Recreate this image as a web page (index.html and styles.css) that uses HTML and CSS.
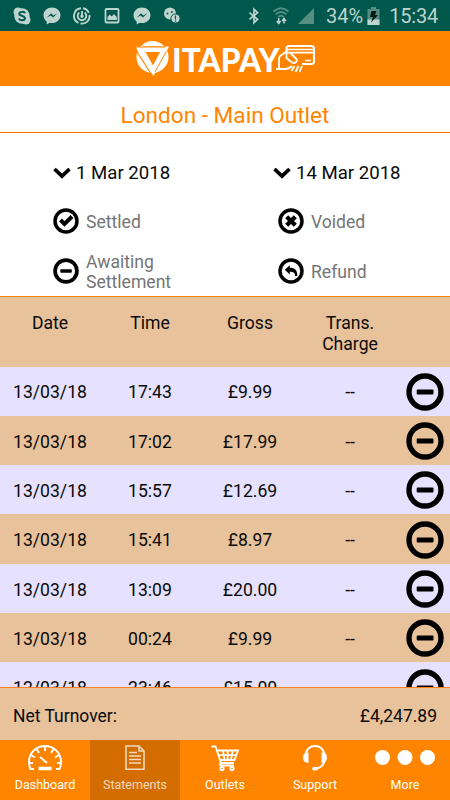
FILE: index.html
```html
<!DOCTYPE html>
<html lang="en">
<head>
<meta charset="utf-8">
<title>Vitapay Statements</title>
<link rel="stylesheet" href="styles.css">
</head>
<body>
<svg class="defs" width="0" height="0" aria-hidden="true">
  <symbol id="minus" viewBox="0 0 38 38"><circle cx="19" cy="19" r="16" fill="none" stroke="#000" stroke-width="5.4"/><rect x="10.7" y="16.4" width="16.8" height="5.2" rx="1" fill="#000"/></symbol>
  <symbol id="chevron" viewBox="0 0 18 12"><path d="M1.500 2 9 9.200 16.500 2" fill="none" stroke="#000" stroke-width="3.700"/></symbol>
  <symbol id="messenger" viewBox="0 0 18 18"><path fill="#bed4ce" d="M9 .5C4.200.5.5 3.900.5 8.300c0 2.600 1.200 4.800 3.200 6.200V17.500l3-1.700c.7.200 1.500.3 2.300.3 4.800 0 8.500-3.400 8.500-7.800S13.800.5 9 .5z"/><path d="M3.800 10.500 8 6.200l2.300 2.200 4-2.200-4.300 4.400-2.300-2.200z" fill="#00574b"/></symbol>
</svg>
<div class="app">
  <div class="status">
    <div class="notices">
      <svg width="18" height="18" viewBox="0 0 18 18"><circle cx="9" cy="9" r="7.700" fill="#bed4ce"/><circle cx="5" cy="5" r="4.500" fill="#bed4ce"/><circle cx="13" cy="13" r="4.500" fill="#bed4ce"/><path d="M12 6.200C11.500 4.500 6.500 4.200 6.300 6.700c-.2 2.700 5.700 1.700 5.600 4.500-.1 2.600-5.300 2.500-6 .3" fill="none" stroke="#00574b" stroke-width="2"/></svg>
      <svg width="18" height="18"><use href="#messenger"/></svg>
      <svg width="18" height="18" viewBox="0 0 18 18" fill="none" stroke="#bed4ce" stroke-width="1.900"><path d="M8 1.300a7.600 7.600 0 0 0-2.500 14.500M7.500 16.500A7.600 7.600 0 0 0 16.500 8M15.800 6A7.500 7.500 0 0 0 10 1.300"/><path d="M6.300 5.600a4.300 4.300 0 1 0 5.400 0M9 4v4.500"/><circle cx="9" cy="9.300" r=".8"/></svg>
      <svg width="18" height="18" viewBox="0 0 18 18"><rect x="2.500" y="2" width="13" height="13.500" rx="1" fill="none" stroke="#bed4ce" stroke-width="1.800"/><path d="M4.500 13V10l2.300-2.500 2 2 2.200-2.500 2.800 3v3z" fill="#bed4ce"/></svg>
      <svg width="18" height="18"><use href="#messenger"/></svg>
      <svg width="18" height="18" viewBox="0 0 18 18"><circle cx="7" cy="6.500" r="6" fill="#bed4ce"/><circle cx="12.500" cy="11.500" r="4.600" fill="#bed4ce" stroke="#00574b"/><circle cx="4.500" cy="6.500" r="1" fill="#00574b"/><circle cx="8.800" cy="5" r="1" fill="#00574b"/><path d="M12.500 8.500v4M12.500 13.500v1.200" stroke="#00574b" stroke-width="1.200"/></svg>
    </div>
    <div class="system">
      <svg class="bluetooth" width="12" height="18" viewBox="0 0 12 18"><path d="m1.500 5.700 8 6.600-3.500 3.400V2.300l3.500 3.400-8 6.600" fill="none" stroke="#bed4ce" stroke-width="1.700"/></svg>
      <svg class="wifi" width="19" height="19" viewBox="0 0 19 19"><g fill="none" stroke="#568e84" stroke-width="1.900"><path d="M1.500 5.500q7.500-6.500 15 0M3.700 8.400q5.300-4.600 10.600 0M6 11q3-2.500 6 0"/></g><path d="M6.700 12v5M4.800 15l1.900 2.500L8.600 15M12 17.500v-5M10.100 15 12 12.500l1.900 2.500" fill="none" stroke="#bed4ce" stroke-width="1.500"/></svg>
      <svg class="signal" width="18" height="18" viewBox="0 0 18 18"><path d="M17 1v16H1z" fill="#568e84"/></svg>
      <span class="percent">34%</span>
      <svg class="battery" width="13" height="20" viewBox="0 0 13 20"><path d="M4 1h5v2h3.500v16H.5V3H4z" fill="#568e84"/><path d="M.5 13.500h12V19H.5z" fill="#bed4ce"/><path d="M4.500 5h5L8 9h3L4 16.500 6 11H3z" fill="#001b16"/></svg>
      <span class="clock">15:34</span>
    </div>
  </div>
  <header class="brand">
    <svg width="36" height="38" viewBox="0 0 36 38"><circle cx="18.500" cy="17" r="16" fill="#fff"/><path d="M1.500 6.500H35L19.500 36 3 9.500" fill="#fff"/><path d="M1 6.800h30.500M2 10.200 17.500 34.500" fill="none" stroke="#ff8500" stroke-width="1.200"/><path d="M32.500 11 21 32" fill="none" stroke="#ff8500" stroke-width="1"/><path d="M11.500 12h14.500l-7 13.500z" fill="#ff8500"/></svg>
    <span class="wordmark">ITAPAY</span>
    <svg class="card" width="39" height="30" viewBox="0 0 39 30" fill="none" stroke="#fff" stroke-width="2"><path d="M10.500 7V4.500Q10.500 2 13 2h22.500Q38 2 38 4.500v13q0 2.500-2.500 2.500H26"/><path d="M10.500 5.500H38M10.500 8.700H38M29 16.500h6" stroke-width="1.700"/><path d="M0 25h9q4 0 7-3M3 25V15q0-3 4-5l3.500-2.500V14l4 3.500q4 3 6 0 1-2-1-3.500L14 8.500M15.500 27l3-5M19.500 28l3-6M23.500 28l2.500-6" stroke-width="1.800"/></svg>
  </header>
  <h1 class="outlet">London - Main Outlet</h1>
  <section class="filters">
    <div class="date"><svg width="18" height="12"><use href="#chevron"/></svg>1 Mar 2018</div>
    <div class="date"><svg width="18" height="12"><use href="#chevron"/></svg>14 Mar 2018</div>
    <div class="key"><svg width="26" height="26" viewBox="0 0 26 26"><circle cx="13" cy="13" r="11" fill="none" stroke="#000" stroke-width="3.500"/><path d="m7.500 12 4 4L19 8.500" fill="none" stroke="#000" stroke-width="4"/></svg><span>Settled</span></div>
    <div class="key"><svg width="26" height="26" viewBox="0 0 26 26"><circle cx="13" cy="13" r="11" fill="none" stroke="#000" stroke-width="3.500"/><path d="m8.700 8.700 8.600 8.600M17.300 8.700l-8.600 8.600" stroke="#000" stroke-width="4.300"/></svg><span>Voided</span></div>
    <div class="key"><svg width="26" height="26"><use href="#minus"/></svg><span>Awaiting<br>Settlement</span></div>
    <div class="key"><svg width="26" height="26" viewBox="0 0 26 26"><circle cx="13" cy="13" r="11" fill="none" stroke="#000" stroke-width="3.500"/><path d="m6.800 11.800 5-4.600v2.600c5 0 7.700 2.500 7.500 8.200h-2.200c0-3-1.500-4.300-5.300-4.300v2.700z"/></svg><span>Refund</span></div>
  </section>
  <main class="statement">
    <div class="row head"><span>Date</span><span>Time</span><span>Gross</span><span>Trans.<br>Charge</span></div>
    <div class="row"><span>13/03/18</span><span>17:43</span><span>£9.99</span><span>--</span><svg><use href="#minus"/></svg></div>
    <div class="row"><span>13/03/18</span><span>17:02</span><span>£17.99</span><span>--</span><svg><use href="#minus"/></svg></div>
    <div class="row"><span>13/03/18</span><span>15:57</span><span>£12.69</span><span>--</span><svg><use href="#minus"/></svg></div>
    <div class="row"><span>13/03/18</span><span>15:41</span><span>£8.97</span><span>--</span><svg><use href="#minus"/></svg></div>
    <div class="row"><span>13/03/18</span><span>13:09</span><span>£20.00</span><span>--</span><svg><use href="#minus"/></svg></div>
    <div class="row"><span>13/03/18</span><span>00:24</span><span>£9.99</span><span>--</span><svg><use href="#minus"/></svg></div>
    <div class="row"><span>12/03/18</span><span>23:46</span><span>£15.00</span><span></span><svg><use href="#minus"/></svg></div>
  </main>
  <div class="total"><span>Net Turnover:</span><span>£4,247.89</span></div>
  <nav class="tabs">
    <a class="tab"><svg width="36" height="28" viewBox="0 0 36 28" fill="none" stroke="#fff" stroke-width="2"><path d="M7 25H3.500Q2 22 2 18C2 9 9 2 18 2s16 7 16 16q0 4-1.500 7H29M18 2v5M9.500 5l2.500 4M26.500 5 24 9M4 11l4 2.500M32 11l-4 2.500M2 19h4M34 19h-4"/><path d="m13 13 7 6" stroke-width="2"/><path d="M11.500 24.500h13" stroke-width="3.500"/></svg><span>Dashboard</span></a>
    <a class="tab active"><svg width="36" height="28" viewBox="0 0 36 28" fill="none" stroke="#f2d9bf" stroke-width="1.600"><path d="M9 2h13l5 5v18.200H9zM22 2v5h5M12 8.500h8M12 12h12M12 15.500h12M12 19h12"/></svg><span>Statements</span></a>
    <a class="tab"><svg width="36" height="28" viewBox="0 0 36 28" fill="none" stroke="#fff" stroke-width="1.800"><path d="M4.500 2.500h4L14 19h13M10 6.500h21L27.500 16H13.500M16 6.500l1.500 9.500M20.700 6.500V16M25.800 6.500 24 16M11.500 11.200H29M14 19q-2.500 1.500 0 2.500h13"/><circle cx="15" cy="24.500" r="1.700"/><circle cx="25" cy="24.500" r="1.700"/></svg><span>Outlets</span></a>
    <a class="tab"><svg width="36" height="28" viewBox="0 0 36 28" fill="none" stroke="#fff" stroke-width="2"><path d="M8.500 10C10 4.500 13.500 2 18 2s8 2.500 9.500 8M27.500 17q-1.500 6-8 7.500"/><path d="M11.500 8.500v10.500Q6 18.500 6 13.500T11.500 8.500zM24.500 8.500v10.500q5.500-.5 5.500-5.500T24.500 8.500z" fill="#fff" stroke="none"/><ellipse cx="18" cy="24.700" rx="2.800" ry="1.900" fill="#fff" stroke="none"/></svg><span>Support</span></a>
    <a class="tab"><svg width="64" height="28" viewBox="0 0 64 28" fill="#fff"><circle cx="9.500" cy="13.500" r="7.500"/><circle cx="32" cy="13.500" r="7.500"/><circle cx="54.500" cy="13.500" r="7.500"/></svg><span>More</span></a>
  </nav>
</div>
</body>
</html>
```
FILE: styles.css
```css
* { box-sizing: border-box; }
body { margin: 0; font-family: Roboto, "Liberation Sans", sans-serif; color: #0a0a0a; background: #fff; }
.defs { display: none; }
.app { width: 450px; height: 800px; display: flex; flex-direction: column; overflow: hidden; }
svg { flex: none; display: block; }

.status { height: 31px; flex: none; background: #00574b; display: flex; justify-content: space-between; padding: 0 12px 0 13px; color: #bed4ce; }
.notices { display: flex; align-items: center; gap: 12px; }
.system { display: flex; align-items: center; font-size: 20px; }
.bluetooth { margin-left: -3px; }
.wifi { margin-left: 12px; }
.signal { margin-left: 6px; }
.percent { margin-left: 11px; letter-spacing: 0; }
.battery { margin-left: 4px; }
.clock { margin-left: 9px; letter-spacing: -.2px; }

.brand { height: 55px; flex: none; background: #ff8500; display: flex; align-items: center; padding-left: 134px; color: #fff; }
.wordmark { width: 112px; flex: none; margin-left: 2px; font: 900 31.500px/36px Lato, sans-serif; letter-spacing: .1px; white-space: nowrap; padding-top: 2px; }
.card { margin-left: -8px; }

.outlet { margin: 0; height: 47px; flex: none; border-bottom: 1px solid #ff7200; color: #ff8500; font-size: 22.600px; font-weight: 400; line-height: 60px; text-align: center; }

.filters { height: 163px; flex: none; display: grid; grid-template-columns: 225px 225px; grid-template-rows: 63px 50px 50px; }
.date { display: flex; align-items: center; gap: 5px; padding: 16px 0 0 53px; font-size: 18.600px; }
.date:nth-child(2) { padding-left: 48px; }
.key { display: flex; align-items: center; gap: 7px; padding-left: 53px; color: #757575; font-size: 17.600px; line-height: 20.500px; }
.key span { padding-top: 2px; }

.statement { height: 391px; flex: none; overflow: hidden; border-top: 1px solid #ff8500; }
.row { height: 49.330px; display: grid; grid-template-columns: repeat(4, 100px) 50px; align-items: center; text-align: center; background: #e5e1ff; font-size: 17.600px; line-height: 20.500px; padding-top: 3px; }
.row:nth-child(odd) { background: #e8c29b; }
.row.head { height: 69.500px; align-items: start; padding-top: 16px; }
.row svg { width: 38px; height: 38px; justify-self: center; margin-top: -2px; }

.total { height: 53px; flex: none; background: #e8c29b; border-top: 1px solid #ff8022; display: flex; justify-content: space-between; align-items: center; padding: 3px 13px 0; font-size: 17.500px; }

.tabs { height: 60px; flex: none; display: grid; grid-template-columns: repeat(5, 90px); background: #ff8500; color: #fff; }
.tab { display: flex; flex-direction: column; align-items: center; padding-top: 4px; font-size: 12.500px; line-height: 15px; }
.tab span { margin-top: 5px; }
.active { background: #d46d00; color: #f2d9bf; }
```
